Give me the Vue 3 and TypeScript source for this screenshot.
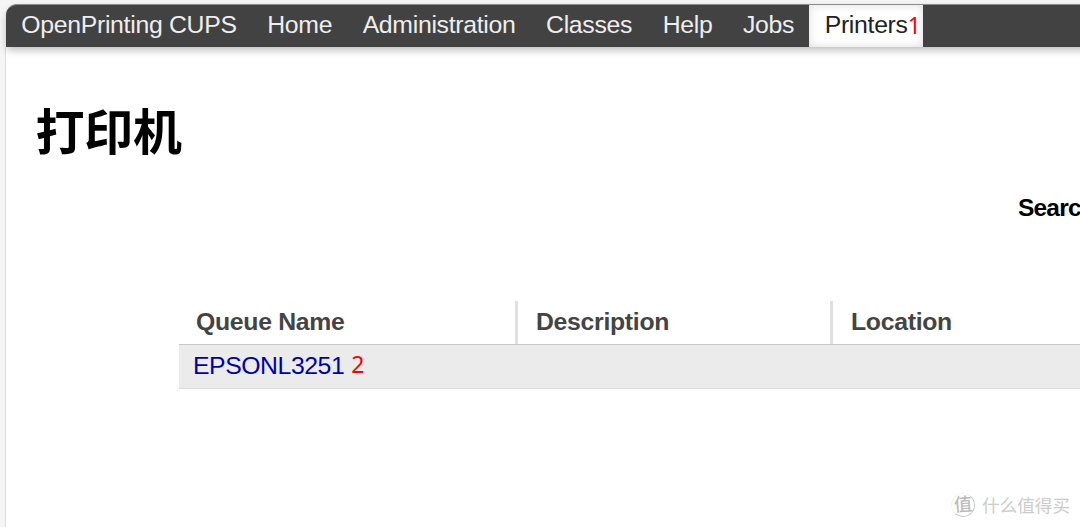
<script lang="ts" setup>
type Item = { label: string; mark?: string };

const items: Item[] = [
  { label: 'OpenPrinting CUPS' },
  { label: 'Home' },
  { label: 'Administration' },
  { label: 'Classes' },
  { label: 'Help' },
  { label: 'Jobs' },
  { label: 'Printers', mark: '1' },
];
const columns = ['Queue Name', 'Description', 'Location'];
</script>
<template>
  <div class="page">
    <nav class="header">
      <a
        v-for="item in items"
        :key="item.label"
        class="item"
        :class="{ active: item.mark }"
      >
        {{ item.label }}<span v-if="item.mark" class="mark">{{ item.mark }}</span>
      </a>
    </nav>
    <main class="body">
      <h1>打印机</h1>
      <div class="search">Searc</div>
      <div class="list">
        <div class="head">
          <div v-for="column in columns" :key="column" class="cell">{{ column }}</div>
        </div>
        <div class="row">
          <a class="queue">EPSONL3251</a>
          <span class="step">2</span>
        </div>
      </div>
    </main>
    <div class="watermark">
      <span class="logo">值</span>
      <span>什么值得买</span>
    </div>
  </div>
</template>
<style>
body {
  margin: 0;
  overflow: hidden;
  background: #f5f5f5;
}
</style>
<style scoped>
.page {
  position: relative;
  box-sizing: border-box;
  width: 1080px;
  height: 527px;
  padding: 4px 0 0 6px;
  overflow: hidden;
  font-family: 'Liberation Sans', 'Noto Sans CJK SC', sans-serif;
  font-size: 24.8px;
  letter-spacing: -0.3px;
}

.header {
  position: relative;
  display: flex;
  box-sizing: border-box;
  height: 43px;
  margin-right: -20px;
  border-top: 1px solid #8c8c8c;
  border-radius: 11px 0 0 0;
  background: #424242;
  box-shadow: 0 4px 9px -1px rgba(0, 0, 0, 0.28);
}

.item {
  padding: 0 15.25px;
  color: #eee;
  line-height: 40px;
  white-space: nowrap;
}

.active {
  box-sizing: border-box;
  width: 114px;
  background: #fff;
  box-shadow: inset 0 0 10px #ddd;
  color: #222;
}

.mark {
  color: #f00;
  font-family: 'Noto Sans', sans-serif;
  font-size: 23px;
  line-height: 1;
  position: relative;
  top: 1px;
}

.body {
  height: 480px;
  overflow: hidden;
  border-left: 1px solid #ddd;
  margin-left: -1px;
  background: #fff;
}

h1 {
  margin: 51px 0 0 29.5px;
  font-size: 49px;
  font-weight: bold;
  line-height: 70px;
}

.search {
  margin: 26px 0 0 1012px;
  font-size: 24.5px;
  font-weight: bold;
  letter-spacing: -0.8px;
  line-height: 28px;
}

.list {
  margin: 79px 0 0 173px;
}

.head {
  display: flex;
  height: 43px;
  border-bottom: 1px solid #c8c8c8;
}

.cell {
  box-sizing: border-box;
  flex: none;
  width: 315px;
  padding-left: 18px;
  border-right: 3px solid #e0e0e0;
  color: #444;
  font-weight: bold;
  line-height: 42px;
}

.cell:first-child {
  width: 339px;
  padding-left: 17px;
}

.cell:last-child {
  border: 0;
}

.row {
  display: flex;
  height: 43px;
  padding-left: 14px;
  border-bottom: 1px solid #dcdcdc;
  background: #ebebeb;
  line-height: 42px;
}

.queue {
  color: #00a;
  letter-spacing: -0.45px;
}

.step {
  margin-left: 7px;
  color: #f00;
  font-family: 'Noto Sans', sans-serif;
  font-size: 23px;
  line-height: 38px;
}

.watermark {
  position: absolute;
  top: 493px;
  left: 951px;
  display: flex;
  align-items: center;
  gap: 7px;
  color: #ccc;
  font-family: 'Noto Sans CJK SC', sans-serif;
  font-size: 17.6px;
  letter-spacing: 0;
  line-height: 24px;
}

.logo {
  box-sizing: border-box;
  width: 24px;
  height: 24px;
  border: 1px solid #f4f4f4;
  border-right-color: #c8c8c8;
  border-bottom-color: #c8c8c8;
  border-radius: 50%;
  color: #bbb;
  font-size: 18px;
  font-weight: 500;
  line-height: 19px;
  text-align: center;
  transform: rotate(-4deg);
}
</style>
